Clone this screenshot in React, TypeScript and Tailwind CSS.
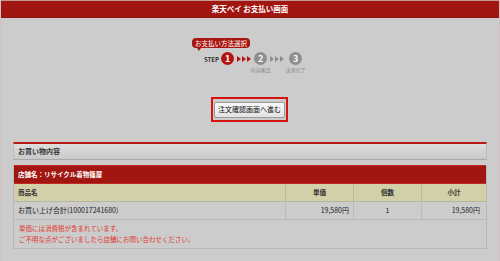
import React from "react";

const FONT = "font-['Noto_Sans_CJK_JP','Noto_Sans',sans-serif]";

function StepCircle({ n, active }: { n: number; active?: boolean }) {
  return (
    <div
      className={
        "w-[13px] h-[13px] rounded-full flex items-center justify-center text-white text-[9px] font-bold leading-none " +
        (active ? "bg-[#b3140f]" : "bg-[#8e8e8e]")
      }
    >
      {n}
    </div>
  );
}

function Arrows({ active }: { active?: boolean }) {
  return (
    <div className={"flex gap-[1px] mx-[3px] " + (active ? "text-[#b3140f]" : "text-[#8e8e8e]")}>
      {[0, 1, 2].map((i) => (
        <svg key={i} width="4" height="6" viewBox="0 0 4 6">
          <path d="M0 0 L4 3 L0 6 Z" fill="currentColor" />
        </svg>
      ))}
    </div>
  );
}

export default function App() {
  return (
    <div className={`w-[500px] h-[261px] overflow-hidden bg-[#cccccc] ${FONT} border-x border-[#d6c2c2]`}>
      <header className="h-[18px] bg-[#a21611] border-t border-[#c79a98] border-b border-b-[#8e120e] flex items-center justify-center text-white text-[7.5px] font-bold">
        楽天ペイ お支払い画面
      </header>

      {/* steps */}
      <div className="pt-[34px] flex justify-center pl-[6px]">
        <div className="flex items-center relative">
          <span className="text-[6px] font-bold text-[#333] mr-[2px] mt-[1px]">STEP</span>
          <div className="relative">
            <div className="absolute bottom-[17px] left-[-29px] bg-[#a8150f] rounded-[4px] text-white text-[6.5px] leading-none px-[3px] h-[10px] flex items-center whitespace-nowrap">
              お支払い方法選択
              <span className="absolute left-[5px] bottom-[-3px] w-0 h-0 border-x-[2px] border-x-transparent border-t-[3px] border-t-[#a8150f]" />
            </div>
            <StepCircle n={1} active />
          </div>
          <Arrows active />
          <div className="relative">
            <StepCircle n={2} />
            <span className="absolute top-[14px] left-1/2 -translate-x-1/2 text-[5px] text-[#888] whitespace-nowrap">内容確認</span>
          </div>
          <Arrows />
          <div className="relative ml-[2px]">
            <StepCircle n={3} />
            <span className="absolute top-[14px] left-1/2 -translate-x-1/2 text-[5px] text-[#888] whitespace-nowrap">決済完了</span>
          </div>
        </div>
      </div>

      {/* button */}
      <div className="flex justify-center mt-[32px] pr-[1px]">
        <div className="border-2 border-[#d4140f] w-[77px] h-[25px] flex items-center justify-center">
          <button className="h-[16px] px-[3px] bg-gradient-to-b from-[#fafafa] to-[#e2e2e2] border border-[#9a9a9a] rounded-[2px] text-[7px] text-[#111] leading-none whitespace-nowrap">
            注文確認画面へ進む
          </button>
        </div>
      </div>

      <div className="mx-[12px] mt-[20px]">
        <div className="h-[18px] border-t-2 border-t-[#b51a14] border-x border-x-[#bdbdbd] border-b border-b-[#a8a8a8] bg-gradient-to-b from-[#dedede] to-[#c9c9c9] flex items-center pl-[4px] text-[7px] font-bold text-[#333]">
          お買い物内容
        </div>

        <div className="mt-[5px] border border-[#b9b9b9] border-t-0">
          <div className="h-[19px] bg-[#a21611] border-y border-[#c42a22] flex items-center pl-[4px] text-white text-[6.5px] font-bold">
            店舗名：リサイクル着物篠屋
          </div>
          <div className="grid grid-cols-[271px_68px_68px_1fr] h-[18px] bg-[#d1d0a8] text-[6.5px] font-bold text-[#333] border-b border-[#b5b5a0]">
            <div className="flex items-center pl-[4px]">商品名</div>
            <div className="flex items-center justify-center border-l border-[#bdbc9c]">単価</div>
            <div className="flex items-center justify-center border-l border-[#bdbc9c]">個数</div>
            <div className="flex items-center justify-center border-l border-[#bdbc9c]">小計</div>
          </div>
          <div className="grid grid-cols-[271px_68px_68px_1fr] h-[18px] text-[7px] text-[#222] border-b border-[#b9b9b9]">
            <div className="flex items-center pl-[4px]">お買い上げ合計(100017241680)</div>
            <div className="flex items-center justify-end pr-[4px] border-l border-[#bababa]">19,580円</div>
            <div className="flex items-center justify-center border-l border-[#bababa]">1</div>
            <div className="flex items-center justify-end pr-[6px] border-l border-[#bababa]">19,580円</div>
          </div>
          <div className="h-[28px] pl-[5px] pt-[3px] text-[6.5px] leading-[11px] text-[#e0372c]">
            <p>単価には消費税が含まれています。</p>
            <p>ご不明な点がございましたら店舗にお問い合わせください。</p>
          </div>
        </div>
      </div>
    </div>
  );
}
